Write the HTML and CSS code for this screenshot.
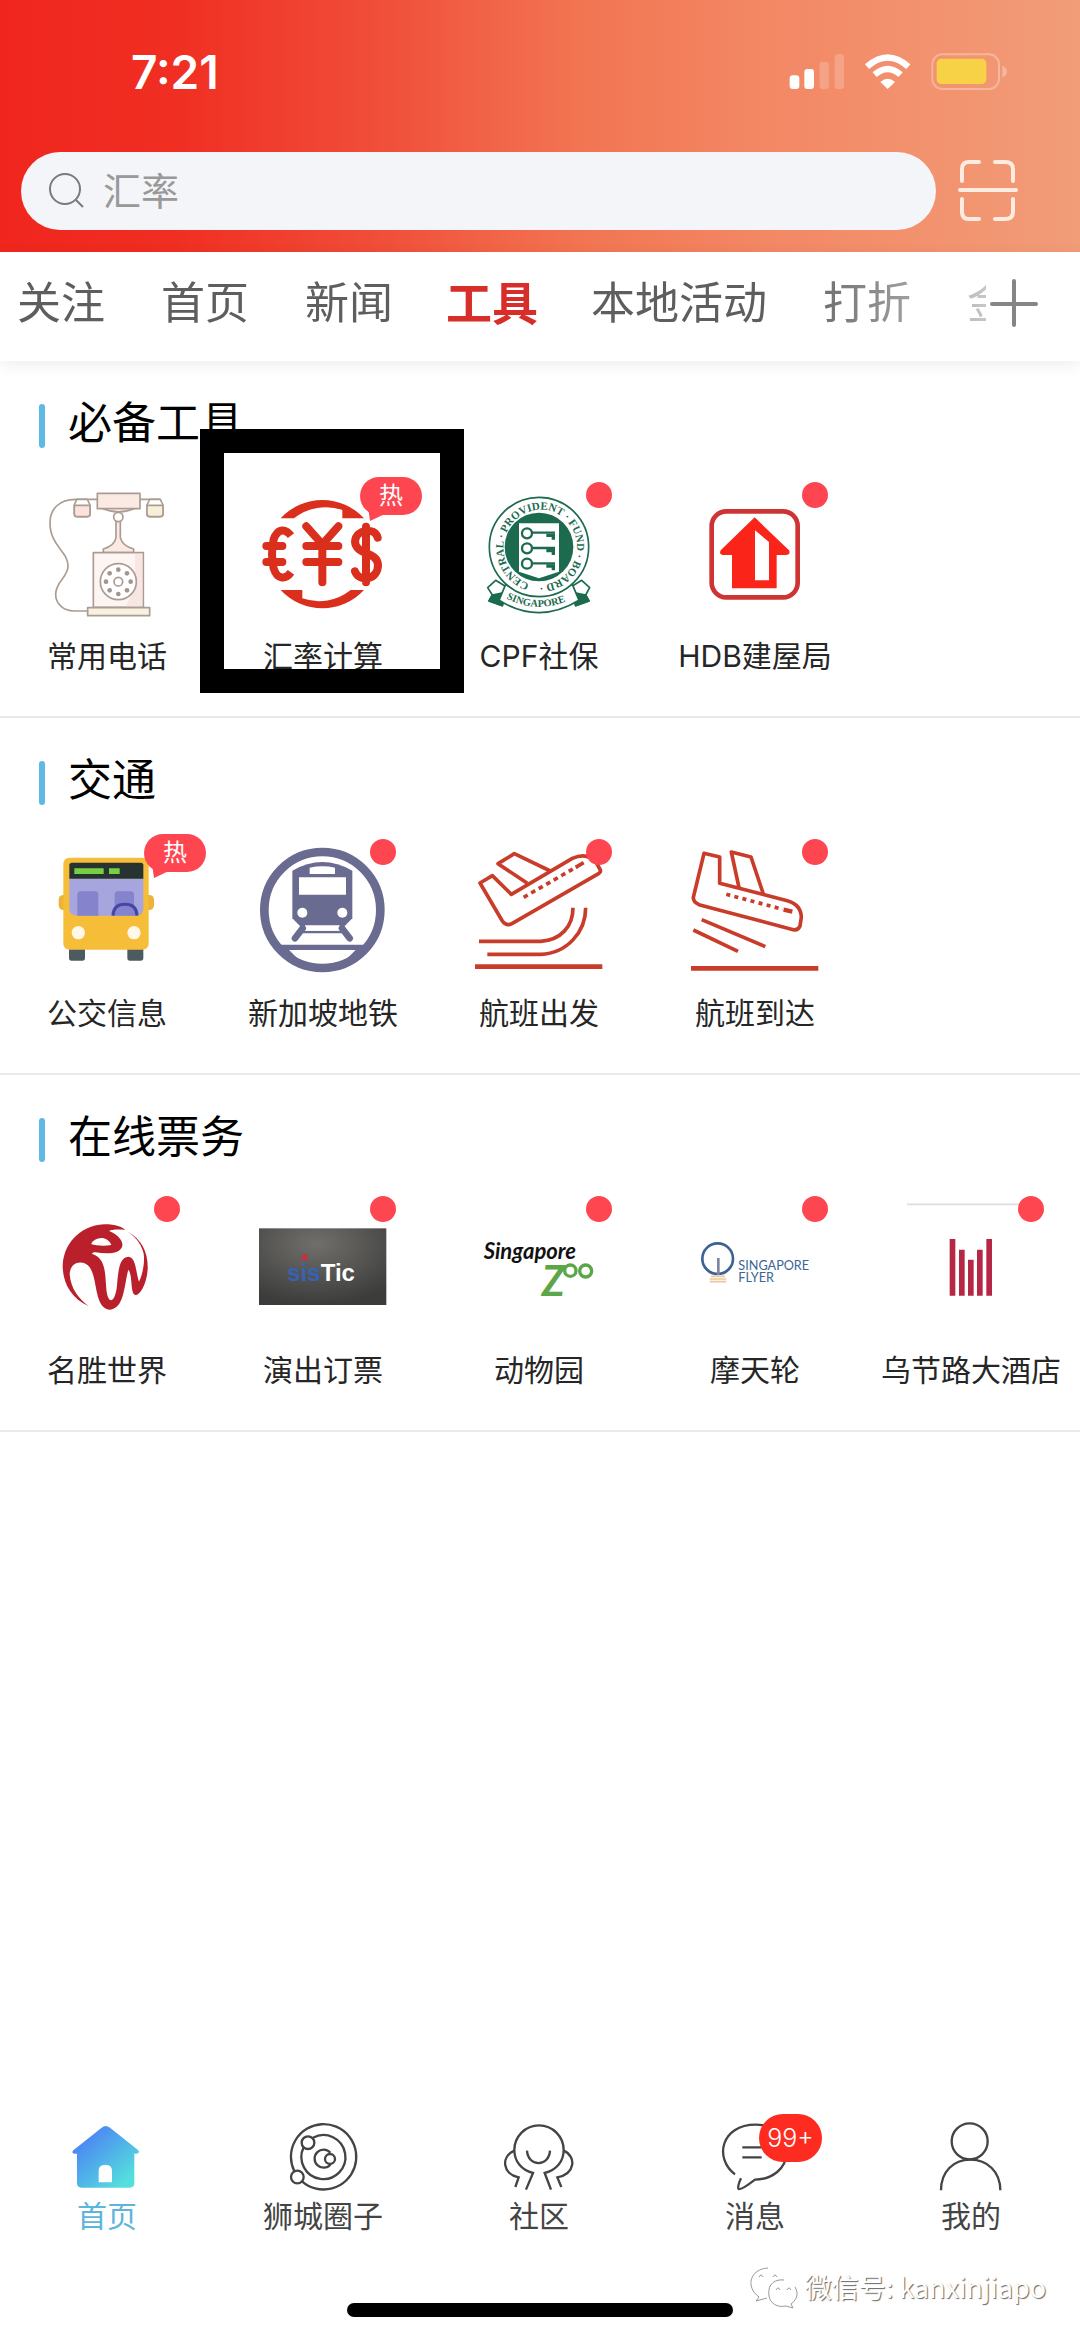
FILE: index.html
```html
<!DOCTYPE html>
<html lang="zh-CN">
<head>
<meta charset="utf-8">
<meta name="viewport" content="width=device-width, initial-scale=1">
<title>工具</title>
<link rel="stylesheet" href="styles.css">
</head>
<body>
<header class="header">
  <div class="status">
    <time class="clock">7:21</time>
    <svg class="status-icons" viewBox="744 150 660 132" aria-hidden="true">
      <g fill="#fff">
        <rect x="749" y="226" width="29" height="41" rx="9"/>
        <rect x="793" y="207" width="29" height="60" rx="9"/>
        <g opacity=".2"><rect x="839" y="185" width="28" height="82" rx="9"/><rect x="884" y="163" width="28" height="104" rx="9"/></g>
      </g>
      <g fill="none" stroke="#fff" stroke-width="19">
        <path d="M981 200Q1043 145 1105 200"/>
        <path d="M1004 224Q1043 190 1082 224"/>
      </g>
      <path d="M1021 246Q1043 226 1065 246L1043 267Z" fill="#fff"/>
      <rect x="1177" y="163" width="200" height="104" rx="30" fill="none" stroke="#fff" stroke-opacity=".3" stroke-width="6"/>
      <path d="M1387 198Q1401 203 1401 215T1387 232Z" fill="#fff" fill-opacity=".3"/>
      <rect x="1190" y="176" width="149" height="76" rx="14" fill="#f8d246"/>
    </svg>
  </div>
  <div class="search-row">
    <label class="search">
      <svg class="search-icon" viewBox="0 0 36 36" aria-hidden="true"><circle cx="16" cy="16" r="15"/><path d="M27 27l7 7"/></svg>
      <input class="search-input" type="search" placeholder="汇率" aria-label="搜索">
    </label>
    <button class="scan" type="button" aria-label="扫一扫">
      <svg viewBox="0 0 60 62" aria-hidden="true"><path d="M4 21V9Q4 2 11 2H21M37 2H47Q55 2 55 9V21M4 39V52Q4 59 11 59H21M37 59H47Q55 59 55 52V39M2 30H58"/></svg>
    </button>
  </div>
</header>

<nav class="tabs" aria-label="频道">
  <div class="tab-list">
    <a class="tab" href="#">关注</a>
    <a class="tab" href="#">首页</a>
    <a class="tab" href="#">新闻</a>
    <a class="tab tab-active" href="#">工具</a>
    <a class="tab" href="#">本地活动</a>
    <a class="tab" href="#">打折</a>
    <a class="tab" href="#">金融</a>
  </div>
  <button class="add" type="button" aria-label="添加频道">
    <svg viewBox="0 0 48 48" aria-hidden="true"><path d="M2 25H46M24 2V46"/></svg>
  </button>
</nav>

<main class="main">
  <section class="group">
    <h2 class="group-title">必备工具</h2>
    <div class="grid">
      <a class="item" href="#">
        <svg class="icon" viewBox="132 324 384 384" aria-hidden="true">
          <g fill="none" stroke="#aa9c92" stroke-width="5" stroke-linejoin="round">
            <path d="M295 355H230C180 355 153 385 153 425C153 495 207 510 207 555C207 590 170 600 170 640C170 670 195 690 225 690H265"/>
            <path d="M423 355H482V368"/>
            <path d="M295 375Q358 410 423 375" fill="#fdf3ee"/>
            <rect x="295" y="337" width="128" height="46" fill="#fbeae3"/>
            <path d="M233 355H265L273 372V398Q273 407 263 407H235Q226 407 226 398V372Z" fill="#fff"/>
            <path d="M226 373H273V398Q273 407 263 407H235Q226 407 226 398Z" fill="#fbe3dc"/>
            <path d="M452 355H484L492 372V398Q492 407 482 407H454Q444 407 444 398V372Z" fill="#fff"/>
            <path d="M444 373H492V398Q492 407 482 407H454Q444 407 444 398Z" fill="#f8efd9"/>
            <path d="M351 420V470Q346 495 313 504V515H404V504Q370 495 364 470V420Z" fill="#fbeae3"/>
            <circle cx="358" cy="408" r="14" fill="#fff"/>
            <rect x="283" y="515" width="150" height="164" fill="#fdf5f2"/>
            <path d="M408 518V625L380 676H430V518Z" fill="#f8e6e4" stroke="none"/>
            <rect x="266" y="680" width="186" height="24" fill="#f9f0df"/>
            <circle cx="358" cy="602" r="54" fill="#fff"/>
            <circle cx="358" cy="602" r="13"/>
          </g>
          <g fill="#a3958e"><circle cx="358" cy="566" r="7"/><circle cx="384" cy="577" r="7"/><circle cx="395" cy="602" r="7"/><circle cx="384" cy="628" r="7"/><circle cx="358" cy="639" r="7"/><circle cx="332" cy="628" r="7"/><circle cx="321" cy="602" r="7"/><circle cx="332" cy="577" r="7"/></g>
        </svg>
        <span class="label">常用电话</span>
      </a>
      <a class="item" href="#">
        <svg class="icon" viewBox="780 324 384 384" aria-hidden="true">
          <g fill="#da2f1c"><path d="M845 412A170 170 0 0 1 1095 412H1030V387A152 152 0 0 0 885 412Z"/><path d="M1095 627A170 170 0 0 1 845 627H910V652A152 152 0 0 0 1055 627Z"/></g>
          <g fill="none" stroke="#da2f1c" stroke-width="24" stroke-linecap="round" stroke-linejoin="round">
            <path d="M876 464C856 438 834 446 824 475Q814 519 824 562C834 594 858 598 876 574" stroke-linecap="butt"/>
            <path d="M802 495H850M802 543H850"/>
            <path d="M922 436L970 490L1018 436M970 490V604M922 495H1018M922 543H1018"/>
            <path d="M1136 470C1128 437 1070 445 1068 482C1070 523 1136 510 1137 553C1137 597 1080 604 1068 571M1101 437V604"/>
          </g>
        </svg>
        <span class="hot">热</span>
        <span class="label">汇率计算</span>
        <span class="marker" aria-hidden="true"></span>
      </a>
      <a class="item" href="#">
        <svg class="icon" viewBox="48 144 384 384" aria-hidden="true">
          <defs><path id="ring" d="M211 428A114 114 0 0 1 269 208A114 114 0 0 1 213 429"/><path id="ribbon" d="M142 472Q240 524 346 470"/></defs>
          <g fill="#fff" stroke="#1c6b4e" stroke-width="5" stroke-linejoin="round">
            <path d="M110 418L86 440L100 462L90 480L130 494L146 440Z"/><path d="M368 418L392 440L380 462L390 480L350 494L332 440Z"/>
            <path d="M100 462L90 480L130 494L136 455ZM380 462L390 480L350 494L344 455Z" fill="#1c6b4e"/>
            <path d="M140 430Q240 490 340 430L360 478Q240 552 120 478Z"/>
            <circle cx="240" cy="318" r="149"/>
          </g>
          <circle cx="240" cy="318" r="103" fill="#1c6b4e"/>
          <path d="M180 247H300V392L240 412L180 392Z" fill="#fff"/>
          <g fill="none" stroke="#1c6b4e" stroke-width="7"><circle cx="204" cy="277" r="15"/><circle cx="204" cy="322" r="15"/><circle cx="204" cy="368" r="15"/><path d="M219 275H288M219 321H288M219 367H288"/></g>
          <path d="M262 278H288V296H278V288H262ZM262 324H288V342H278V334H262ZM262 370H288V388H278V380H262Z" fill="#1c6b4e"/>
          <g class="seal-text"><text font-size="33"><textPath href="#ring">CENTRAL · PROVIDENT · FUND · BOARD ·</textPath></text><text font-size="31"><textPath href="#ribbon">SINGAPORE</textPath></text></g>
        </svg>
        <span class="dot"></span>
        <span class="label">CPF社保</span>
      </a>
      <a class="item" href="#">
        <svg class="icon" viewBox="696 144 384 384" aria-hidden="true">
          <rect x="758" y="211" width="258" height="258" rx="44" fill="#fff" stroke="#cf3434" stroke-width="14"/>
          <path d="M887 229L990 328Q996 341 980 342H953V442H819V342H793Q779 341 785 328Z" fill="#fb2419"/>
          <path d="M888 268L930 303V418H888Z" fill="#fff"/>
        </svg>
        <span class="dot"></span>
        <span class="label">HDB建屋局</span>
      </a>
    </div>
  </section>

  <section class="group">
    <h2 class="group-title">交通</h2>
    <div class="grid">
      <a class="item" href="#">
        <svg class="icon" viewBox="132 318 384 384" aria-hidden="true">
          <rect x="179" y="465" width="286" height="45" rx="14" fill="#edb237"/>
          <path d="M210 620H258V654Q258 662 250 662H218Q210 662 210 654ZM385 620H433V654Q433 662 425 662H393Q385 662 385 654Z" fill="#4b5b60"/>
          <rect x="193" y="353" width="256" height="276" rx="18" fill="#f5bd38"/>
          <path d="M211 415H433V505Q433 527 411 527H233Q211 527 211 505Z" fill="#a7a5de"/>
          <path d="M235 527V464Q235 454 245 454H288Q298 454 298 464V527ZM347 500V464Q347 454 357 454H395Q405 454 405 464V500Z" fill="#8583cb"/>
          <path d="M342 527Q343 493 378 493T414 527" fill="#8583cb" stroke="#4547a6" stroke-width="9"/>
          <path d="M211 416V376Q211 368 219 368H425Q433 368 433 376V416Z" fill="#263331"/>
          <path d="M226 385H314V402H226ZM330 385H362V402H330Z" fill="#77cf42"/>
          <circle cx="238" cy="578" r="20" fill="#fff8e8"/><circle cx="405" cy="578" r="20" fill="#fff8e8"/>
        </svg>
        <span class="hot">热</span>
        <span class="label">公交信息</span>
      </a>
      <a class="item" href="#">
        <svg class="icon" viewBox="780 318 384 384" aria-hidden="true">
          <circle cx="970" cy="510" r="174" fill="#fff" stroke="#6a6b91" stroke-width="26"/>
          <path d="M845 622H1095" stroke="#6a6b91" stroke-width="16"/>
          <path d="M840 622H862L900 660L870 650ZM1100 622H1078L1040 660L1070 650Z" fill="#6a6b91"/>
          <path d="M880 392Q970 340 1060 392V535L1035 560H905L880 535Z" fill="#6a6b91"/>
          <path d="M932 383Q970 375 1008 383V402H932ZM900 412H1041V464H900Z" fill="#fff"/>
          <circle cx="910" cy="518" r="15" fill="#fff"/><circle cx="1030" cy="518" r="15" fill="#fff"/>
          <path d="M917 554H1023M912 576H1028" stroke="#6a6b91" stroke-width="8"/><path d="M918 556H1022V572H918Z" fill="#fff"/>
          <path d="M911 565L888 595M1029 565L1052 595" stroke="#6a6b91" stroke-width="20" stroke-linecap="round"/>
        </svg>
        <span class="dot"></span>
        <span class="label">新加坡地铁</span>
      </a>
      <a class="item" href="#">
        <svg class="icon" viewBox="138 78 384 384" aria-hidden="true">
          <g fill="none" stroke="#c93c2a" stroke-width="11" stroke-linejoin="round">
            <path d="M153 189L190 167L247 223L430 115Q475 95 502 128L514 150Q516 156 510 160L250 310Q232 320 220 303Z"/>
            <path d="M295 190L207 131L256 101L364 153"/>
            <path d="M150 364H335C395 360 432 320 432 263M175 403H335C415 400 470 335 470 263"/>
            <path d="M284 232L444 140" stroke-dasharray="14 12"/><path d="M440 142L464 128"/>
            <path d="M138 440H520" stroke-width="14"/>
          </g>
        </svg>
        <span class="dot"></span>
        <span class="label">航班出发</span>
      </a>
      <a class="item" href="#">
        <svg class="icon" viewBox="786 78 384 384" aria-hidden="true">
          <g fill="none" stroke="#c93c2a" stroke-width="11" stroke-linejoin="round">
            <path d="M825 100L872 111V190L1075 242Q1116 253 1117 292L1113 318Q1107 332 1093 329L810 254Q792 246 793 232Z"/>
            <path d="M930 203L907 96L966 111L1003 222"/>
            <path d="M892 223L1062 268" stroke-dasharray="12 13"/><path d="M1064 269L1090 275" stroke-width="13"/>
            <path d="M818 299L1009 380M793 330L927 394"/>
            <path d="M786 445H1168" stroke-width="14"/>
          </g>
        </svg>
        <span class="dot"></span>
        <span class="label">航班到达</span>
      </a>
    </div>
  </section>

  <section class="group">
    <h2 class="group-title">在线票务</h2>
    <div class="grid">
      <a class="item" href="#">
        <svg class="icon" viewBox="132 312 384 384" aria-hidden="true">
          <path d="M270 622C215 598 191 550 191 500C195 420 260 376 318 376C350 376 370 384 378 393C360 390 335 392 330 396C362 408 372 430 370 440C365 465 325 465 290 460C282 460 276 463 282 466C320 480 318 520 322 570C326 617 348 615 354 560C358 510 362 475 388 473C412 475 410 520 420 548C434 520 438 480 433 460C425 430 405 410 386 398C430 420 448 465 446 510C444 550 425 590 408 588C393 580 402 530 388 512C375 560 376 632 330 632C285 625 297 540 272 505C258 484 215 482 212 525C215 570 240 600 270 622Z" fill="#b9202b"/>
          <path d="M276 435C290 412 325 410 337 438C315 442 292 440 276 435Z" fill="#fff"/>
        </svg>
        <span class="dot"></span>
        <span class="label">名胜世界</span>
      </a>
      <a class="item" href="#">
        <svg class="icon" viewBox="780 312 384 384" aria-hidden="true">
          <defs><radialGradient id="wall" cx=".45" cy=".2" r=".8"><stop offset="0" stop-color="#706f6c"/><stop offset="1" stop-color="#3c3c3a"/></radialGradient></defs>
          <rect x="780" y="388" width="382" height="230" fill="url(#wall)"/>
          <text class="sistic-text" x="865" y="545" font-size="72"><tspan fill="#3562b8">sis</tspan><tspan fill="#fff">Tic</tspan></text>
          <circle cx="917" cy="475" r="9" fill="#c9303a"/>
        </svg>
        <span class="dot"></span>
        <span class="label">演出订票</span>
      </a>
      <a class="item" href="#">
        <svg class="icon" viewBox="138 72 384 384" aria-hidden="true">
          <g class="zoo-text"><text x="164" y="240" font-size="66" fill="#111">Singapore</text><text x="338" y="350" font-size="124" fill="#5ba648">Z</text></g>
          <g fill="none" stroke="#5ba648" stroke-width="10"><circle cx="424" cy="275" r="17"/><circle cx="470" cy="276" r="18"/></g>
        </svg>
        <span class="dot"></span>
        <span class="label">动物园</span>
      </a>
      <a class="item" href="#">
        <svg class="icon" viewBox="786 72 384 384" aria-hidden="true">
          <circle cx="866" cy="239" r="46" fill="none" stroke="#3b6293" stroke-width="8"/>
          <path d="M868 237V288" stroke="#8084a4" stroke-width="8"/>
          <path d="M846 292H888M842 300H892M842 308H892" stroke="#ecc89b" stroke-width="5"/>
          <g class="flyer-text" font-size="38" fill="#3c6595"><text x="928" y="273">SINGAPORE</text><text x="928" y="310">FLYER</text></g>
        </svg>
        <span class="dot"></span>
        <span class="label">摩天轮</span>
      </a>
      <a class="item" href="#">
        <svg class="icon" viewBox="1434 72 384 384" aria-hidden="true">
          <path d="M1434 76H1818" stroke="#ddd" stroke-width="5"/>
          <path d="M1562 180H1579V350H1562ZM1590 212H1607V350H1590ZM1617 242H1634V350H1617ZM1644 212H1661V350H1644ZM1672 180H1689V350H1672Z" fill="#b52745"/>
        </svg>
        <span class="dot"></span>
        <span class="label">乌节路大酒店</span>
      </a>
    </div>
  </section>
</main>

<footer class="footer">
  <nav class="bottom-nav" aria-label="主导航">
    <a class="nav-item nav-active" href="#">
      <svg class="nav-icon" viewBox="216 90 216 216" aria-hidden="true">
        <defs><linearGradient id="home" x1="0" y1="0" x2="1" y2="1"><stop offset=".15" stop-color="#4b82f4"/><stop offset=".85" stop-color="#55dede"/></linearGradient></defs>
        <path fill-rule="evenodd" d="M308 113Q320 103 333 113L418 181Q424 190 412 191H406V279Q406 293 392 293H248Q234 293 234 279V191H226Q216 190 223 181ZM299 277H339V242Q339 224 319 224T299 242Z" fill="url(#home)"/>
      </svg>
      <span>首页</span>
    </a>
    <a class="nav-item" href="#">
      <svg class="nav-icon line" viewBox="864 90 216 216" aria-hidden="true">
        <path d="M886 244A98 98 0 1 1 909 274"/>
        <circle cx="895" cy="261" r="19"/>
        <path d="M942 143A66 66 0 1 1 914 172"/>
        <circle cx="927" cy="158" r="19"/>
        <path d="M994 188A27 27 0 1 0 994 224"/>
        <circle cx="993" cy="207" r="15"/>
      </svg>
      <span>狮城圈子</span>
    </a>
    <a class="nav-item" href="#">
      <svg class="nav-icon line" viewBox="1512 90 216 216" aria-hidden="true">
        <path d="M1581 299L1602 249C1568 240 1546 215 1546 180A74 74 0 0 1 1694 180C1694 215 1672 240 1637 249L1656 299M1584 182C1587 232 1650 232 1653 182"/>
        <path d="M1546 182C1505 200 1510 252 1559 262L1549 291M1694 182C1734 200 1728 252 1675 262L1687 291"/>
      </svg>
      <span>社区</span>
    </a>
    <a class="nav-item" href="#">
      <svg class="nav-icon line" viewBox="540 90 216 216" aria-hidden="true">
        <path d="M588 253C525 205 545 104 650 104C710 104 742 145 742 190C742 235 700 268 648 269Q608 300 599 297Q594 292 606 265M610 172H668M610 202H668"/>
      </svg>
      <span class="count">99+</span>
      <span>消息</span>
    </a>
    <a class="nav-item" href="#">
      <svg class="nav-icon line" viewBox="1188 90 216 216" aria-hidden="true">
        <circle cx="1292" cy="154" r="54"/><path d="M1206 301C1206 245 1243 209 1294 209S1384 245 1384 301"/>
      </svg>
      <span>我的</span>
    </a>
  </nav>
  <div class="home-bar"></div>
  <div class="watermark">
    <svg class="wechat" viewBox="0 0 50 44" aria-hidden="true"><path d="M10 32C-4 22 1 4 19 3M10 32L7 36L18 33M20 31C18 18 27 14 35 15M46 22C51 30 46 36 42 39L44 43L37 41C28 43 21 38 20 31M10 12Q12 8 14 12M24 12Q26 8 28 12M27 25Q29 21 31 25M38 25Q40 21 42 25"/></svg>
    <span>微信号: kanxinjiapo</span>
  </div>
</footer>
</body>
</html>
```

FILE: styles.css
```css
* {
  box-sizing: border-box;
}

body {
  margin: 0;
  min-height: 100vh;
  display: flex;
  flex-direction: column;
  background: #fff;
  color: #262626;
  font-family: "Inter", "Noto Sans CJK SC", sans-serif;
  overflow-x: hidden;
}

a {
  color: inherit;
  text-decoration: none;
}

button {
  padding: 0;
  border: 0;
  background: none;
}

svg {
  display: block;
}

/* Header */
.header {
  padding: 50px 0 22px;
  background: linear-gradient(90deg, #f0261e 0%, #f02e22 16%, #f0503a 36%, #f27552 54%, #f38764 70%, #f29c78 100%);
}

.status {
  display: flex;
  justify-content: space-between;
  align-items: center;
  height: 44px;
  margin-bottom: 58px;
  padding: 0 72px 0 131px;
}

.clock {
  color: #fff;
  font-size: 46px;
  font-weight: 600;
  line-height: 44px;
}

.status-icons {
  width: 220px;
  height: 44px;
}

.search-row {
  display: flex;
  align-items: center;
  gap: 22px;
  padding: 0 62px 0 21px;
}

.search {
  flex: 1;
  display: flex;
  align-items: center;
  gap: 18px;
  height: 78px;
  padding: 0 28px;
  border-radius: 39px;
  background: #f3f5f8;
}

.search-icon {
  width: 36px;
  height: 36px;
  fill: none;
  stroke: #777a80;
  stroke-width: 2;
}

.search-input {
  flex: 1;
  min-width: 0;
  padding: 0 0 4px;
  border: 0;
  outline: 0;
  background: none;
  color: #333;
  font: 38px/56px "Noto Sans CJK SC", sans-serif;
}

.search-input::placeholder {
  color: #999;
  opacity: 1;
}

.scan {
  width: 60px;
  height: 62px;
}

.scan svg {
  fill: none;
  stroke: #ffece0;
  stroke-width: 4;
  stroke-linecap: round;
}

/* Channel tabs */
.tabs {
  display: flex;
  gap: 4px;
  padding: 21px 42px 28px 17px;
  background: #fff;
  box-shadow: 0 4px 16px rgba(0, 0, 0, 0.07);
}

.tab-list {
  flex: 1;
  min-width: 0;
  display: flex;
  gap: 56px;
  overflow: hidden;
  -webkit-mask-image: linear-gradient(90deg, #000 calc(100% - 200px), rgba(0, 0, 0, 0.35));
  mask-image: linear-gradient(90deg, #000 calc(100% - 200px), rgba(0, 0, 0, 0.35));
}

.tab {
  flex: none;
  color: #5e5e5e;
  font-size: 44px;
  line-height: 60px;
}

.tab-active {
  margin: 0 -3px;
  color: #d82e2a;
  font-size: 46px;
  font-weight: 700;
}

.add {
  width: 48px;
  height: 60px;
}

.add svg {
  height: 48px;
  fill: none;
  stroke: #858585;
  stroke-width: 4;
  stroke-linecap: round;
}

/* Tool groups */
.main {
  flex: 1;
}

.group {
  padding: 43px 0 40px;
  border-bottom: 2px solid #e9e9e9;
}

.group-title {
  display: flex;
  gap: 23px;
  height: 44px;
  margin: 0 0 41px;
  padding-left: 39px;
  color: #000;
  font-size: 44px;
  font-weight: 400;
  line-height: 38px;
}

.group-title::before {
  content: "";
  width: 6px;
  height: 44px;
  border-radius: 3px;
  background: #5fb9e5;
}

.grid {
  display: grid;
  grid-template-columns: repeat(5, 1fr);
  margin: 0 1px 0 -1px;
}

.item {
  position: relative;
  display: flex;
  flex-direction: column;
  align-items: center;
  gap: 19px;
}

.icon {
  width: 128px;
  height: 128px;
}

.label {
  font-size: 30px;
  line-height: 40px;
  white-space: nowrap;
}

.dot {
  position: absolute;
  top: -7px;
  left: calc(50% + 47px);
  width: 26px;
  height: 26px;
  border-radius: 50%;
  background: #fe4651;
}

.hot {
  position: absolute;
  top: -12px;
  left: calc(50% + 37px);
  width: 62px;
  height: 38px;
  border-radius: 19px;
  background: #fe4651;
  color: #fff;
  font-size: 24px;
  line-height: 38px;
  text-align: center;
}

.hot::after {
  content: "";
  position: absolute;
  left: 8px;
  top: 30px;
  width: 20px;
  height: 14px;
  background: #fe4651;
  clip-path: polygon(0 0, 100% 40%, 10% 100%);
}

.marker {
  position: absolute;
  top: -60px;
  left: calc(50% - 123px);
  width: 264px;
  height: 264px;
  border: 24px solid #000;
}

.seal-text {
  fill: #1c6b4e;
  font-family: "Liberation Serif", serif;
  font-weight: 700;
}

.sistic-text {
  font-family: "Liberation Sans", sans-serif;
  font-weight: 700;
}

.zoo-text {
  font-family: "Lato", sans-serif;
  font-style: italic;
  font-weight: 700;
}

.flyer-text {
  font-family: "Lato", sans-serif;
}

/* Bottom navigation */
.footer {
  position: relative;
  padding-bottom: 22px;
}

.bottom-nav {
  display: grid;
  grid-template-columns: repeat(5, 1fr);
  margin: 0 1px 0 -1px;
  padding-bottom: 67px;
}

.nav-item {
  position: relative;
  display: flex;
  flex-direction: column;
  align-items: center;
  gap: 4px;
  color: #444;
  font-size: 30px;
  line-height: 40px;
}

.nav-active {
  color: #5db5de;
}

.nav-icon {
  width: 72px;
  height: 72px;
}

.line {
  fill: none;
  stroke: #444;
  stroke-width: 7;
}

.count {
  position: absolute;
  top: -6px;
  left: calc(50% + 4px);
  width: 63px;
  height: 48px;
  border-radius: 24px;
  background: #fd2b20;
  color: #fff;
  font-size: 25px;
  font-weight: 300;
  line-height: 48px;
  text-align: center;
}

.home-bar {
  width: 386px;
  height: 14px;
  margin: 0 auto;
  border-radius: 7px;
  background: #000;
}

.watermark {
  position: absolute;
  right: 34px;
  bottom: 30px;
  display: flex;
  align-items: center;
  gap: 6px;
  color: #fff;
  font: 27px/40px "Noto Sans CJK SC", sans-serif;
  text-shadow: 1px 1px 1px #666;
}

.wechat {
  width: 50px;
  height: 44px;
  fill: none;
  stroke: #999;
  stroke-width: 1;
}
```
